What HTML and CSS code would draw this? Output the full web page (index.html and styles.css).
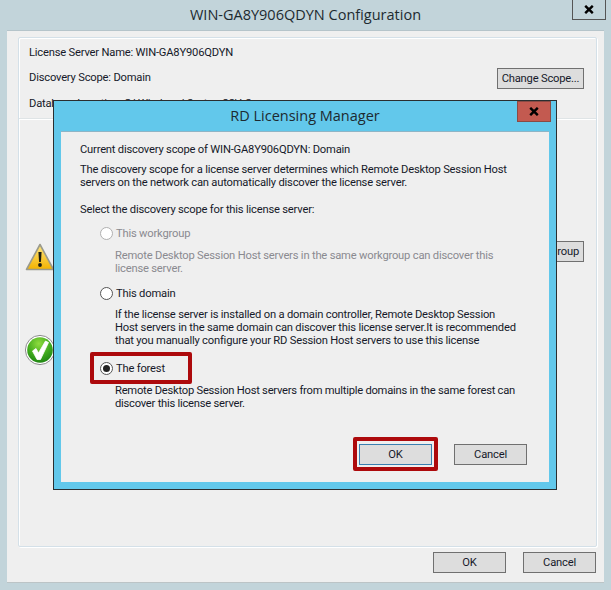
FILE: index.html
```html
<!DOCTYPE html>
<html lang="en">
<head>
<meta charset="utf-8">
<title>WIN-GA8Y906QDYN Configuration</title>
<link rel="stylesheet" href="styles.css">
</head>
<body>
<div class="window">
  <header class="titlebar">
    <h1 class="title">WIN-GA8Y906QDYN Configuration</h1>
    <button class="close close-main"><svg width="10" height="9" viewBox="0 0 10 9"><path class="x" d="M1.2 0.8 L8.8 8.2 M8.8 0.8 L1.2 8.2"/></svg></button>
  </header>
  <div class="panel">
    <section class="group">
      <div class="info">
        <div class="info-text">
          <p class="line">License Server Name: WIN-GA8Y906QDYN</p>
          <div class="scope-row">
            <p class="line">Discovery Scope: Domain</p>
            <button class="btn btn-scope">Change Scope...</button>
          </div>
          <p class="line line-db">Database Location: C:\Windows\System32\LServer</p>
        </div>
      </div>
      <div class="status status-warn">
        <svg class="status-icon" width="30" height="28" viewBox="0 0 30 28">
          <defs><linearGradient id="warn" x1="0" y1="0" x2="0" y2="1"><stop offset="0" stop-color="#ffe680"/><stop offset="1" stop-color="#f2b200"/></linearGradient></defs>
          <path d="M15 1.5 L28.5 26.5 H1.5 Z" fill="url(#warn)" stroke="#9a9a8c" stroke-width="1.6" stroke-linejoin="round"/>
          <path d="M13.4 9 H16.6 L15.9 19 H14.1 Z" fill="#1c1c10"/>
          <circle cx="15" cy="22" r="1.9" fill="#1c1c10"/>
        </svg>
        <button class="btn btn-group">Change Group</button>
      </div>
      <div class="status status-ok">
        <svg class="status-icon" width="30" height="32" viewBox="0 0 30 32">
          <defs><radialGradient id="ok" cx="0.45" cy="0.25" r="0.85"><stop offset="0" stop-color="#8fdc3e"/><stop offset="0.55" stop-color="#3ea81c"/><stop offset="1" stop-color="#157a10"/></radialGradient></defs>
          <circle cx="15" cy="16" r="14.6" fill="#fff" stroke="#8c8c8c" stroke-width="1"/>
          <circle cx="15" cy="16" r="12.8" fill="url(#ok)"/>
          <path d="M7.5 17 L11 14.5 L13.5 19 L20.5 7 L23.5 8.5 L15.5 25.5 H12 Z" fill="#fff" stroke="#fff" stroke-width="0.8" stroke-linejoin="round"/>
        </svg>
      </div>
    </section>
    <footer class="actions">
      <button class="btn">OK</button>
      <button class="btn">Cancel</button>
    </footer>
  </div>
</div>

<div class="dialog">
  <header class="dialog-bar">
    <h2 class="dialog-title">RD Licensing Manager</h2>
    <button class="close close-dialog"><svg width="10" height="9" viewBox="0 0 10 9"><path class="x" d="M1.2 0.8 L8.8 8.2 M8.8 0.8 L1.2 8.2"/></svg></button>
  </header>
  <div class="dialog-body">
    <p class="line">Current discovery scope of WIN-GA8Y906QDYN: Domain</p>
    <p class="line para">The discovery scope for a license server determines which Remote Desktop Session Host<br>servers on the network can automatically discover the license server.</p>
    <p class="line select-label">Select the discovery scope for this license server:</p>
    <div class="option option-workgroup disabled">
      <label class="radio-row"><span class="radio"></span>This workgroup</label>
      <p class="desc">Remote Desktop Session Host servers in the same workgroup can discover this<br>license server.</p>
    </div>
    <div class="option option-domain">
      <label class="radio-row"><span class="radio"></span>This domain</label>
      <p class="desc">If the license server is installed on a domain controller, Remote Desktop Session<br>Host servers in the same domain can discover this license server.It is recommended<br>that you manually configure your RD Session Host servers to use this license</p>
    </div>
    <div class="option option-forest">
      <label class="radio-row"><span class="radio checked"></span>The forest</label>
      <p class="desc">Remote Desktop Session Host servers from multiple domains in the same forest can<br>discover this license server.</p>
      <span class="mark mark-forest"></span>
    </div>
    <div class="dialog-actions">
      <span class="ok-wrap"><button class="btn btn-default">OK</button><span class="mark mark-ok"></span></span>
      <button class="btn">Cancel</button>
    </div>
  </div>
</div>
</body>
</html>
```
FILE: styles.css
```css
* { box-sizing: border-box; }
html, body { margin: 0; padding: 0; }
body {
  width: 611px;
  height: 590px;
  overflow: hidden;
  position: relative;
  background: #c2d4da;
  font-family: Roboto, "Open Sans", sans-serif;
  font-size: 11.2px;
  letter-spacing: -0.2px;
  color: #161a2a;
}
p, h1, h2 { margin: 0; font-weight: 400; }
.window { width: 611px; height: 590px; padding: 0 7px; }
.titlebar { height: 30px; padding-bottom: 1px; display: flex; justify-content: center; align-items: center; }
.title { font-family: "Open Sans", sans-serif; font-size: 14.5px; letter-spacing: 0; color: #1d2a30; }
.close {
  position: absolute;
  width: 34px;
  height: 21px;
  padding: 0;
  display: flex;
  align-items: center;
  justify-content: center;
  border: 1px solid #555;
  background: transparent;
}
.close-main { left: 572px; top: -1px; }
.close-dialog { right: 5px; top: 0; background: #c35a50; border-color: #8a4a44; }
.x { fill: none; stroke: #000; stroke-width: 2.4; }
.panel {
  height: 553px;
  background: #efefef;
  border-bottom: 1px solid #bcc4c6;
  border-top: 1px solid #b5c4ca;
  padding: 6px 7px 0 11px;
}
.group {
  height: 510px;
  background: #efefef;
  border: 1px solid #d4e0e8;
  box-shadow: inset 1px 1px 0 #fff, 1px 1px 0 #fff;
  border-radius: 2px;
  padding: 0 12px 0 10px;
  position: relative;
}
.info { height: 81px; border-bottom: 1px solid #dfe4e6; margin: 0 -12px 0 -10px; padding: 7px 12px 0 10px; box-shadow: 0 1px 0 #fff; }
.line { line-height: 16px; white-space: nowrap; }
.scope-row { display: flex; justify-content: space-between; align-items: center; margin-top: 6px; height: 22px; }
.line-db { margin-top: 7px; }
.btn {
  width: 73px;
  height: 21px;
  padding: 0;
  font: inherit;
  letter-spacing: inherit;
  color: inherit;
  background: #dddddd;
  border: 1px solid #707070;
  white-space: nowrap;
}
.btn-scope { width: 87px; }
.status { display: flex; justify-content: space-between; }
.status-icon { display: block; margin-left: -4px; }
.status-warn { margin-top: 124px; height: 28px; align-items: flex-start; }
.btn-group { width: 87px; margin-top: -2px; text-align: right; padding-right: 4px; }
.status-ok { margin-top: 63px; }
.actions { display: flex; justify-content: flex-end; gap: 17px; margin: 5px 0 0; padding-right: 1px; }
.dialog {
  position: absolute;
  left: 53px;
  top: 100px;
  width: 504px;
  height: 390px;
  background: #62c8eb;
  border: 1px solid #2a2e30;
  padding: 0 7px 7px;
}
.dialog-bar { height: 30px; padding-bottom: 2px; display: flex; align-items: center; justify-content: center; }
.dialog-title { font-family: "Open Sans", sans-serif; font-size: 14.5px; letter-spacing: 0; color: #1d2a30; }
.dialog-body {
  position: relative;
  height: 351px;
  background: #efefef;
  border-top: 1px solid #8eb5c6;
  padding: 10px 22px 0 19px;
}
.para { margin-top: 5px; line-height: 13px; }
.select-label { margin-top: 14px; line-height: 13px; }
.radio-row { display: flex; align-items: center; gap: 3px; height: 16px; white-space: nowrap; }
.radio {
  width: 13px;
  height: 13px;
  border-radius: 50%;
  border: 1px solid #555;
  background: #fff;
  flex: none;
  display: flex;
  align-items: center;
  justify-content: center;
}
.radio.checked::after { content: ""; width: 7px; height: 7px; border-radius: 50%; background: #222; }
.desc { margin: 8px 0 0 15px; line-height: 13px; white-space: nowrap; }
.option { position: relative; margin-left: 20px; }
.option-workgroup { margin-top: 9px; }
.option-domain { margin-top: 10px; }
.option-domain .desc { margin-top: 7px; }
.option-forest { margin-top: 13px; }
.option-forest .desc { letter-spacing: -0.24px; }
.disabled { color: #8a8a90; }
.disabled .radio { border-color: #b0b0b0; }
.mark {
  position: absolute;
  border: 4px solid #ad0a0c;
  border-radius: 2px;
  pointer-events: none;
}
.mark-forest { left: -10px; top: -8px; width: 102px; height: 32px; }
.dialog-actions { display: flex; justify-content: flex-end; gap: 22px; margin-top: 34px; }
.ok-wrap { position: relative; display: block; height: 21px; }
.btn-default { border-color: #3a7fb0; display: block; }
.mark-ok { left: -6px; top: -7px; width: 85px; height: 34px; }
```
